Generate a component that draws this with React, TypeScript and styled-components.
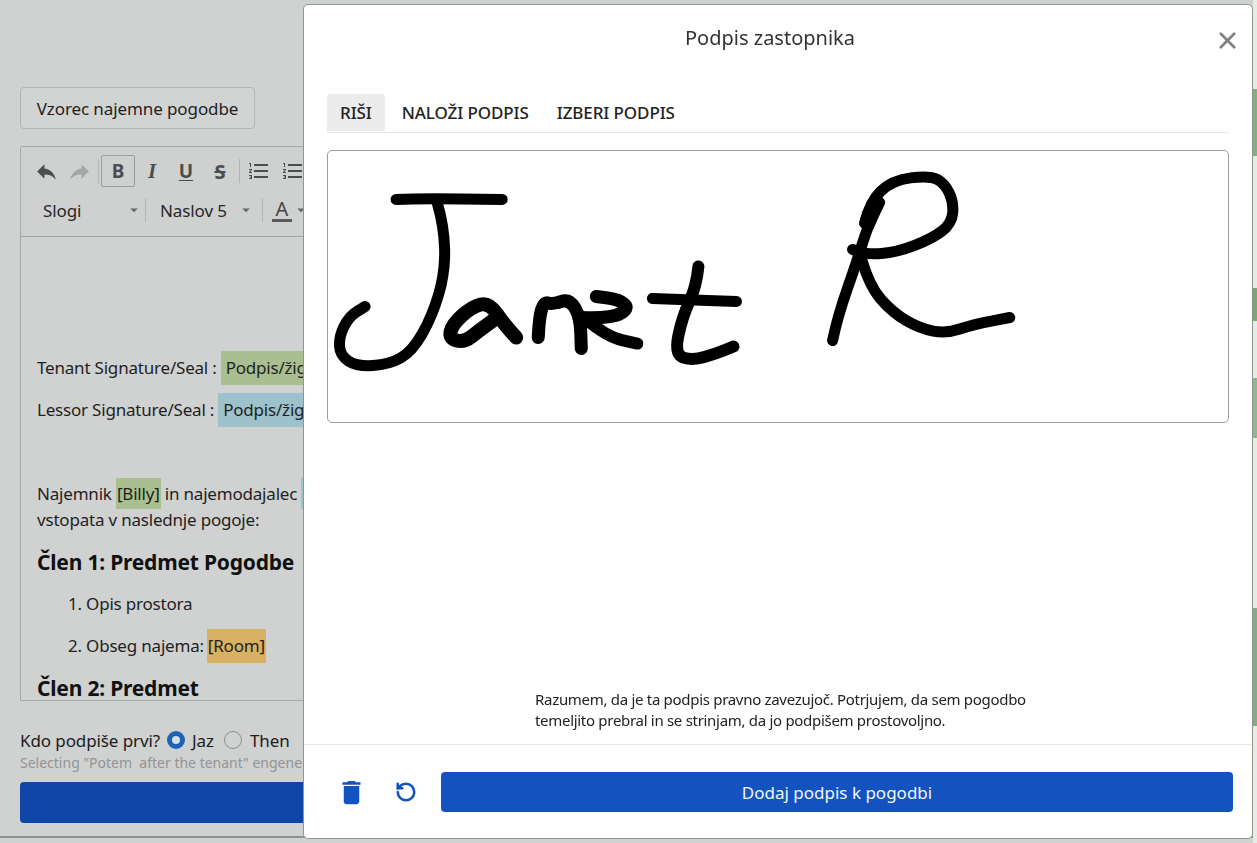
import React from 'react';
import styled, { createGlobalStyle } from 'styled-components';
import { MdReply, MdFormatListNumbered, MdArrowDropDown, MdDelete } from 'react-icons/md';
import { RotateCcw, X } from 'lucide-react';

const GlobalStyle = createGlobalStyle`
  html, body {
    margin: 0;
    padding: 0;
    height: 843px;
    overflow: hidden;
    background: #d0d1d1;
    font-family: "Noto Sans", "Open Sans", sans-serif;
    color: #1a1a1a;
  }
`;

const Page = styled.div`
  display: flex;
  width: 1257px;
  height: 843px;
  overflow: hidden;
`;

const Main = styled.main`
  flex: 0 0 1253px;
  height: 838px;
  box-sizing: border-box;
  padding: 87px 20px 0;
  display: flex;
  flex-direction: column;
  align-items: flex-start;
  border-bottom: 2px solid #8f9090;
  overflow: hidden;
`;

const SideTable = styled.aside`
  flex: 0 0 4px;
  display: flex;
  flex-direction: column;
`;

const SideRow = styled.div<{ $h: number; $c: string }>`
  height: ${(p) => p.$h}px;
  flex: none;
  background: ${(p) => p.$c};
`;

const TemplateButton = styled.button`
  width: 235px;
  height: 42px;
  flex: none;
  padding: 0;
  background: #d2d3d3;
  border: 1px solid #b4b5b5;
  border-radius: 4px;
  font: 400 17px "Noto Sans", sans-serif;
  letter-spacing: -0.1px;
  color: #1f1f1f;
`;

const Editor = styled.section`
  width: 1180px;
  height: 555px;
  flex: none;
  margin-top: 17px;
  box-sizing: border-box;
  border: 1px solid #a8a9a9;
  border-radius: 2px 2px 0 0;
  overflow: hidden;
`;

const Toolbar = styled.div`
  height: 90px;
  box-sizing: border-box;
  padding: 8px 0 0 9px;
  border-bottom: 1px solid #a3a4a4;
  display: flex;
  flex-direction: column;
  background: #cfd0d0;
`;

const ToolRow = styled.div`
  display: flex;
  align-items: center;
  height: 32px;
`;

const SecondRow = styled(ToolRow)`
  margin: 7px 0 0 1px;
`;

const ToolButton = styled.span<{ $w?: number; $active?: boolean; $muted?: boolean; $flip?: boolean }>`
  width: ${(p) => p.$w ?? 34}px;
  height: 32px;
  flex: none;
  box-sizing: border-box;
  display: flex;
  align-items: center;
  justify-content: center;
  border: 1px solid ${(p) => (p.$active ? '#9d9e9e' : 'transparent')};
  border-radius: 2px;
  color: ${(p) => (p.$muted ? '#a5a6a6' : '#4c4d4d')};
  font: 700 19px "Noto Sans", sans-serif;
  transform: ${(p) => (p.$flip ? 'scaleX(-1)' : 'none')};
`;

const Italic = styled.span`
  font: italic 700 21px "Liberation Serif", serif;
`;

const Under = styled.span`
  text-decoration: underline;
  text-underline-offset: 2px;
`;

const Strike = styled.span`
  font-size: 20px;
  text-decoration: line-through;
`;

const ToolSep = styled.span<{ $gap?: number }>`
  width: 1px;
  height: 24px;
  flex: none;
  margin: 0 ${(p) => p.$gap ?? 2}px;
  background: #b3b4b4;
`;

const Combo = styled.span<{ $w: number }>`
  width: ${(p) => p.$w}px;
  flex: none;
  box-sizing: border-box;
  padding-left: 12px;
  display: flex;
  align-items: center;
  justify-content: space-between;
  font-size: 17px;
  letter-spacing: -0.1px;
  color: #262626;
  svg {
    color: #666;
    flex: none;
  }
`;

const ColorA = styled.span`
  width: 20px;
  margin-left: 2px;
  text-align: center;
  line-height: 20px;
  font-size: 20px;
  color: #444;
  border-bottom: 3px solid #5a5a5a;
`;

const Body = styled.div`
  padding: 116px 16px 0;
  font-size: 17px;
  letter-spacing: -0.2px;
  line-height: 26px;
  color: #1f1f1f;
`;

const Line = styled.p`
  margin: 0 0 12px;
  height: 30px;
  display: flex;
  align-items: center;
  white-space: nowrap;
`;

const TextBlock = styled.p`
  margin: 56px 0 14px;
  white-space: nowrap;
`;

const Mark = styled.span<{ $c: string; $ml?: number }>`
  padding: 4px ${(p) => (p.$ml ? 5 : 1)}px;
  margin-left: ${(p) => p.$ml ?? 0}px;
  background: ${(p) => p.$c};
`;

const Article = styled.h3`
  margin: 12px 0 12px;
  font-size: 21px;
  letter-spacing: -0.2px;
  line-height: 30px;
  font-weight: 700;
  color: #111;
  white-space: nowrap;
`;

const Item = styled.div`
  display: flex;
  align-items: center;
  height: 30px;
  margin: 0 0 12px 31px;
  white-space: nowrap;
  gap: 3px;
`;

const SignerRow = styled.div`
  margin-top: 24px;
  height: 30px;
  flex: none;
  display: flex;
  align-items: center;
  font-size: 17px;
  letter-spacing: -0.1px;
  color: #1c1c1c;
  white-space: nowrap;
`;

const Radio = styled.span<{ $on?: boolean }>`
  width: 18px;
  height: 18px;
  flex: none;
  margin: 0 ${(p) => (p.$on ? '7px' : '8px 0 10px')};
  box-sizing: border-box;
  border-radius: 50%;
  background: ${(p) => (p.$on ? '#d6dde6' : 'transparent')};
  border: ${(p) => (p.$on ? '5px solid #1a63b5' : '1.5px solid #8d8e8e')};
`;

const HelpText = styled.div`
  margin-top: -1px;
  font-size: 14px;
  line-height: 18px;
  color: #939494;
  white-space: nowrap;
  flex: none;
`;

const BlueBar = styled.div`
  width: 1180px;
  height: 41px;
  flex: none;
  margin-top: 10px;
  border-radius: 4px;
  background: #0f45a6;
`;

const Modal = styled.div`
  position: fixed;
  left: 303px;
  top: 4px;
  width: 950px;
  height: 835px;
  box-sizing: border-box;
  display: flex;
  flex-direction: column;
  background: #fff;
  border: 1px solid #8f9590;
  border-radius: 5px;
`;

const ModalHeader = styled.header`
  position: relative;
  height: 89px;
  flex: none;
  box-sizing: border-box;
  padding: 16px 16px 0 0;
  text-align: center;
  font-size: 20px;
  line-height: 34px;
  color: #333;
`;

const CloseButton = styled.span`
  position: absolute;
  right: 11px;
  top: 22px;
  display: flex;
  color: #808080;
`;

const Tabs = styled.nav`
  margin: 0 23px;
  height: 38px;
  flex: none;
  display: flex;
  border-bottom: 1px solid #e6e6e6;
`;

const Tab = styled.span<{ $active?: boolean }>`
  height: 37px;
  box-sizing: border-box;
  padding: 0 ${(p) => (p.$active ? 13 : 14)}px;
  margin-right: ${(p) => (p.$active ? 3 : 0)}px;
  display: flex;
  align-items: center;
  font-size: 17px;
  letter-spacing: -0.1px;
  font-weight: 500;
  color: #222;
  background: ${(p) => (p.$active ? '#ececec' : 'transparent')};
  border-radius: 3px 3px 0 0;
`;

const SignatureBox = styled.div`
  margin: 17px 23px 0;
  height: 273px;
  flex: none;
  box-sizing: border-box;
  border: 1.5px solid #9c9c9c;
  border-radius: 5px;
  overflow: hidden;
`;

const SignatureSvg = styled.svg`
  display: block;
  width: 100%;
  height: 100%;
`;

const Notice = styled.p`
  margin: auto 0 13px 231px;
  font-size: 15px;
  letter-spacing: -0.3px;
  line-height: 21px;
  color: #222;
  white-space: nowrap;
`;

const Footer = styled.footer`
  height: 94px;
  flex: none;
  box-sizing: border-box;
  padding: 27px 19px 0 22px;
  border-top: 1px solid #e6e6e6;
  display: flex;
  align-items: flex-start;
`;

const IconButton = styled.span<{ $w: number }>`
  width: ${(p) => p.$w}px;
  height: 40px;
  flex: none;
  display: flex;
  align-items: center;
  justify-content: center;
  color: #1353c0;
`;

const SaveButton = styled.button`
  flex: 1;
  height: 40px;
  margin-left: 5px;
  border: 0;
  border-radius: 4px;
  background: #1353c0;
  color: #f2f5fb;
  font: 400 17px "Noto Sans", sans-serif;
`;

type Stroke = { w: number; pts: [number, number][] };

const strokes: Stroke[] = [
  { w: 11, pts: [[397, 200], [420, 199], [503, 200]] },
  { w: 11, pts: [[438, 203], [445, 227], [446, 273], [433, 317], [413, 352], [390, 365], [358, 367], [341, 356], [340, 337], [350, 317], [366, 307]] },
  { w: 14, pts: [[517, 338], [505, 325], [490, 303], [473, 307], [453, 325], [450, 339], [465, 343], [480, 331], [498, 318]] },
  { w: 13, pts: [[539, 338], [540, 317], [545, 302], [553, 305], [570, 299], [581, 317], [582, 349]] },
  { w: 13, pts: [[583, 318], [612, 319], [630, 309], [620, 300], [597, 297]] },
  { w: 12, pts: [[587, 320], [607, 337], [638, 344]] },
  { w: 12, pts: [[699, 267], [697, 287], [683, 317], [675, 355], [693, 361], [717, 354], [734, 347]] },
  { w: 11, pts: [[653, 299], [680, 300], [737, 302]] },
  { w: 11, pts: [[833, 341], [838, 317], [858, 260], [867, 230], [880, 203]] },
  { w: 11, pts: [[865, 224], [870, 203], [892, 181], [930, 176], [945, 184], [954, 203], [952, 224], [933, 239], [897, 253], [867, 255], [853, 250]] },
  { w: 11, pts: [[862, 260], [870, 287], [893, 313], [920, 329], [947, 334], [973, 325], [1010, 318]] },
  { w: 16, pts: [[868, 222], [876, 204]] },
];

// smooth the pen points with midpoints so the strokes look hand drawn
const toPath = (pts: [number, number][]) => {
  let d = `M${pts[0][0]} ${pts[0][1]}`;
  for (let i = 1; i < pts.length - 1; i++) {
    const mx = (pts[i][0] + pts[i + 1][0]) / 2;
    const my = (pts[i][1] + pts[i + 1][1]) / 2;
    d += ` Q${pts[i][0]} ${pts[i][1]} ${mx} ${my}`;
  }
  const last = pts[pts.length - 1];
  return `${d} L${last[0]} ${last[1]}`;
};

const sideRows = [
  { h: 89, c: '#e4eedf' },
  { h: 67, c: '#82b07f' },
  { h: 132, c: '#e3efe3' },
  { h: 33, c: '#78a874' },
  { h: 57, c: '#e3efe3' },
  { h: 60, c: '#8fb88c' },
  { h: 170, c: '#e3efe3' },
  { h: 118, c: '#86ac82' },
  { h: 117, c: '#e6ece6' },
];

export default function App() {
  return (
    <>
      <GlobalStyle />
      <Page>
        <Main>
          <TemplateButton>Vzorec najemne pogodbe</TemplateButton>
          <Editor>
            <Toolbar>
              <ToolRow>
                <ToolButton $w={33}><MdReply size={25} /></ToolButton>
                <ToolButton $w={33} $muted $flip><MdReply size={25} /></ToolButton>
                <ToolSep />
                <ToolButton $active>B</ToolButton>
                <ToolButton><Italic>I</Italic></ToolButton>
                <ToolButton><Under>U</Under></ToolButton>
                <ToolButton><Strike>S</Strike></ToolButton>
                <ToolSep />
                <ToolButton><MdFormatListNumbered size={24} /></ToolButton>
                <ToolButton><MdFormatListNumbered size={24} /></ToolButton>
              </ToolRow>
              <SecondRow>
                <Combo $w={112}>Slogi<MdArrowDropDown size={18} /></Combo>
                <ToolSep />
                <Combo $w={107}>Naslov 5<MdArrowDropDown size={18} /></Combo>
                <ToolSep $gap={7} />
                <ColorA>A</ColorA>
                <MdArrowDropDown size={18} color="#666" />
              </SecondRow>
            </Toolbar>
            <Body>
              <Line>Tenant Signature/Seal :<Mark $c="#a9bf90" $ml={4}>Podpis/žig najemnika</Mark></Line>
              <Line>Lessor Signature/Seal :<Mark $c="#9dc2cb" $ml={4}>Podpis/žig zastopnika</Mark></Line>
              <TextBlock>
                Najemnik <Mark $c="#a9bf90">[Billy]</Mark> in najemodajalec <Mark $c="#9dc2cb">[Janet]</Mark>
                <br />
                vstopata v naslednje pogoje:
              </TextBlock>
              <Article>Člen 1: Predmet Pogodbe</Article>
              <Item>1. Opis prostora</Item>
              <Item>2. Obseg najema: <Mark $c="#d9b162">[Room]</Mark></Item>
              <Article>Člen 2: Predmet</Article>
            </Body>
          </Editor>
          <SignerRow>
            Kdo podpiše prvi?<Radio $on />Jaz<Radio />Then
          </SignerRow>
          <HelpText>Selecting "Potem&nbsp; after the tenant" engeners the signing order for the document.</HelpText>
          <BlueBar />
        </Main>
        <SideTable>
          {sideRows.map((r, i) => (
            <SideRow key={i} $h={r.h} $c={r.c} />
          ))}
        </SideTable>
        <Modal>
          <ModalHeader>
            Podpis zastopnika
            <CloseButton><X size={27} strokeWidth={2.4} /></CloseButton>
          </ModalHeader>
          <Tabs>
            <Tab $active>RIŠI</Tab>
            <Tab>NALOŽI PODPIS</Tab>
            <Tab>IZBERI PODPIS</Tab>
          </Tabs>
          <SignatureBox>
            <SignatureSvg viewBox="329 152 899 270">
              {strokes.map((s, i) => (
                <path key={i} d={toPath(s.pts)} fill="none" stroke="#000" strokeWidth={s.w} strokeLinecap="round" strokeLinejoin="round" />
              ))}
            </SignatureSvg>
          </SignatureBox>
          <Notice>
            Razumem, da je ta podpis pravno zavezujoč. Potrjujem, da sem pogodbo
            <br />
            temeljito prebral in se strinjam, da jo podpišem prostovoljno.
          </Notice>
          <Footer>
            <IconButton $w={50}><MdDelete size={31} /></IconButton>
            <IconButton $w={60}><RotateCcw size={22} strokeWidth={2.8} /></IconButton>
            <SaveButton>Dodaj podpis k pogodbi</SaveButton>
          </Footer>
        </Modal>
      </Page>
    </>
  );
}
